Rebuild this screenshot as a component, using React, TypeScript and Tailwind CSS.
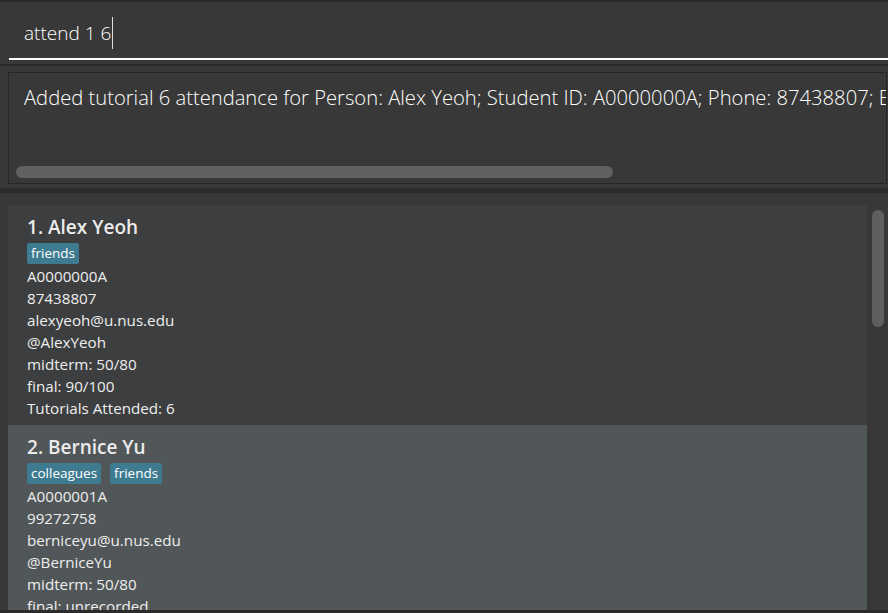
import React from "react";

type Person = {
  name: string;
  tags: string[];
  id: string;
  phone: string;
  email: string;
  tele: string;
  midterm: string;
  final: string;
  tutorials: string;
};

const people: Person[] = [
  {
    name: "Alex Yeoh",
    tags: ["friends"],
    id: "A0000000A",
    phone: "87438807",
    email: "alexyeoh@u.nus.edu",
    tele: "@AlexYeoh",
    midterm: "midterm: 50/80",
    final: "final: 90/100",
    tutorials: "Tutorials Attended: 6",
  },
  {
    name: "Bernice Yu",
    tags: ["colleagues", "friends"],
    id: "A0000001A",
    phone: "99272758",
    email: "berniceyu@u.nus.edu",
    tele: "@BerniceYu",
    midterm: "midterm: 50/80",
    final: "final: unrecorded",
    tutorials: "Tutorials Attended: 0",
  },
];

const font = { fontFamily: '"Open Sans", "Noto Sans", sans-serif' };

function PersonCard({ p, index }: { p: Person; index: number }) {
  const bg = index % 2 === 0 ? "bg-[#3c3e3f]" : "bg-[#515658]";
  return (
    <div className={`${bg} pl-[19px] pt-[9px] h-[220px] shrink-0`}>
      <div className="h-[26px] leading-[26px] text-[19px] font-semibold text-[#ececec]">
        {index + 1}. {p.name}
      </div>
      <div className="flex gap-[9px] mt-[3px]">
        {p.tags.map((t) => (
          <span
            key={t}
            className="h-[21px] leading-[21px] px-[4px] rounded-[2px] bg-[#3e7b91] text-[13.5px] text-white"
          >
            {t}
          </span>
        ))}
      </div>
      <div className="pt-[1px] text-[15.2px] leading-[22px] text-[#eeeeee]">
        <div>{p.id}</div>
        <div>{p.phone}</div>
        <div>{p.email}</div>
        <div>{p.tele}</div>
        <div>{p.midterm}</div>
        <div>{p.final}</div>
        <div>{p.tutorials}</div>
      </div>
    </div>
  );
}

export default function App() {
  return (
    <div className="w-[888px] h-[613px] overflow-hidden bg-[#383838] flex flex-col" style={font}>
      {/* command box */}
      <div className="border-t-2 border-[#2b2b2b] h-[64px] shrink-0 pl-[9px] pt-[2px]">
        <div className="h-[56px] border-b-2 border-white flex items-center pl-[15px] pt-[4px]">
          <span className="text-[19px] font-light text-white">attend 1 6</span>
          <span className="w-px h-[32px] bg-[#e0e0e0] ml-px" />
        </div>
      </div>

      {/* result display */}
      <div className="border-t-2 border-[#2b2b2b] h-[124px] shrink-0 pt-[6px] px-[8px] pr-[1px]">
        <div className="h-[112px] border border-[#262626] flex flex-col overflow-hidden">
          <div className="flex-1 pl-[15px] pt-[9px] text-[20.2px] font-light text-white whitespace-nowrap">
            Added tutorial 6 attendance for Person: Alex Yeoh; Student ID: A0000000A; Phone: 87438807; Email: alexyeoh@u.nus.edu
          </div>
          <div className="h-[17px] pl-[7px] pb-[4px]">
            <div className="w-[597px] h-[12px] rounded-full bg-[#606060]" />
          </div>
        </div>
      </div>

      {/* person list */}
      <div className="border-t-[5px] border-b-[3px] border-[#2b2b2b] flex-1 flex pt-[12px] pl-[8px] overflow-hidden">
        <div className="w-[859px] flex flex-col overflow-hidden">
          {people.map((p, i) => (
            <PersonCard key={p.name} p={p} index={i} />
          ))}
        </div>
        <div className="pl-[5px] pt-[5px]">
          <div className="w-[12px] h-[117px] rounded-full bg-[#5f5f5f]" />
        </div>
      </div>
    </div>
  );
}
